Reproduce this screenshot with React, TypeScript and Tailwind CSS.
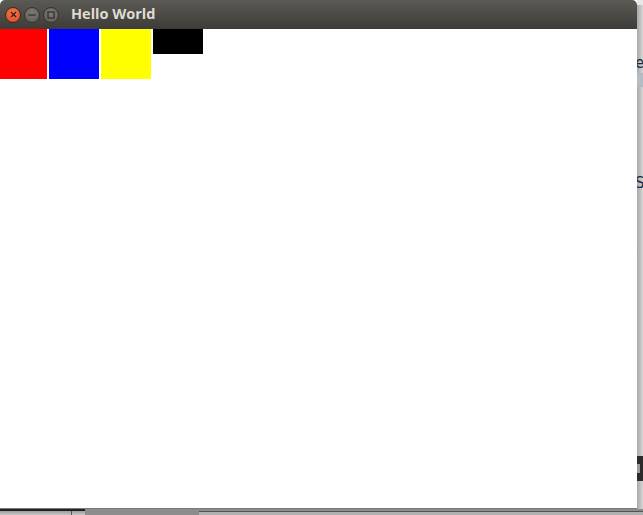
import React from "react";

const WindowButton: React.FC<{ kind: "close" | "min" | "max" }> = ({ kind }) => {
  if (kind === "close") {
    return (
      <div className="w-[16px] h-[16px] rounded-full bg-[radial-gradient(circle_at_50%_35%,#f47b4c,#d9461b)] border border-[#3a2a22] flex items-center justify-center">
        <svg width="7" height="7" viewBox="0 0 7 7">
          <path d="M1 1L6 6M6 1L1 6" stroke="#3b1c10" strokeWidth="1.3" />
        </svg>
      </div>
    );
  }
  return (
    <div className="w-[16px] h-[16px] rounded-full bg-[radial-gradient(circle_at_50%_35%,#7d7b75,#5b5a55)] border border-[#35342f] flex items-center justify-center">
      {kind === "min" ? (
        <svg width="8" height="8" viewBox="0 0 8 8">
          <path d="M0.5 4H7.5" stroke="#2f2e2a" strokeWidth="1.3" />
        </svg>
      ) : (
        <svg width="8" height="8" viewBox="0 0 8 8">
          <rect x="1" y="1" width="6" height="6" fill="none" stroke="#2f2e2a" strokeWidth="1.2" />
        </svg>
      )}
    </div>
  );
};

export default function App() {
  return (
    <div className="w-[643px] h-[515px] overflow-hidden flex flex-col bg-[#9a9a9a]">
      <div className="flex flex-1 min-h-0">
        {/* window */}
        <div className="w-[637px] flex flex-col bg-white border-b border-[#7a7a7a]">
          <div className="h-[29px] shrink-0 rounded-t-[5px] bg-gradient-to-b from-[#5c5a54] to-[#3d3c38] flex items-center pl-[5px]">
            <div className="flex items-center gap-[3px]">
              <WindowButton kind="close" />
              <WindowButton kind="min" />
              <WindowButton kind="max" />
            </div>
            <span className="ml-[12px] text-[14.5px] font-bold text-[#dfdbd2] font-['Open_Sans',sans-serif] leading-none">
              Hello World
            </span>
          </div>
          <div className="flex-1 flex items-start gap-[2px] -ml-[3px]">
            <div className="w-[50px] h-[50px] bg-[#ff0000]" />
            <div className="w-[50px] h-[50px] bg-[#0000ff]" />
            <div className="w-[50px] h-[50px] bg-[#ffff00]" />
            <div className="w-[50px] h-[25px] bg-black" />
          </div>
        </div>
        {/* desktop strip behind on the right */}
        <div className="flex-1 flex flex-col bg-gradient-to-r from-[#a8a8a8] to-[#d6d6d6] overflow-hidden">
          <div className="h-[5px] bg-[#e8e8e8]" />
          <div className="h-[48px]" />
          <div className="h-[20px] text-[15px] leading-[20px] text-[#1c2a3a] font-['DejaVu_Sans',sans-serif] -ml-[2px]">e</div>
          <div className="h-[14px] bg-[#b4bcc6]" />
          <div className="h-[86px]" />
          <div className="h-[20px] text-[15px] leading-[20px] text-[#1c2a3a] font-['DejaVu_Sans',sans-serif] -ml-[2px]">S</div>
          <div className="h-[263px]" />
          <div className="h-[25px] bg-[#2b2b2b] flex flex-col justify-center">
            <div className="h-[9px] w-[3px] bg-[#9a9a9a]" />
          </div>
        </div>
      </div>
      {/* desktop strip below */}
      <div className="h-[6px] shrink-0 flex">
        <div className="w-[85px] border-t-2 border-[#222] bg-gradient-to-b from-[#9c9c9c] to-[#c8c8c8] flex">
          <div className="w-[71px]" />
          <div className="w-px bg-[#555]" />
        </div>
        <div className="w-[114px] bg-[#8c8c8c]" />
        <div className="flex-1 bg-[#8c8c8c] flex flex-col">
          <div className="h-[2px]" />
          <div className="h-px bg-[#555]" />
          <div className="flex-1 bg-[#b0b0b0]" />
        </div>
      </div>
    </div>
  );
}
